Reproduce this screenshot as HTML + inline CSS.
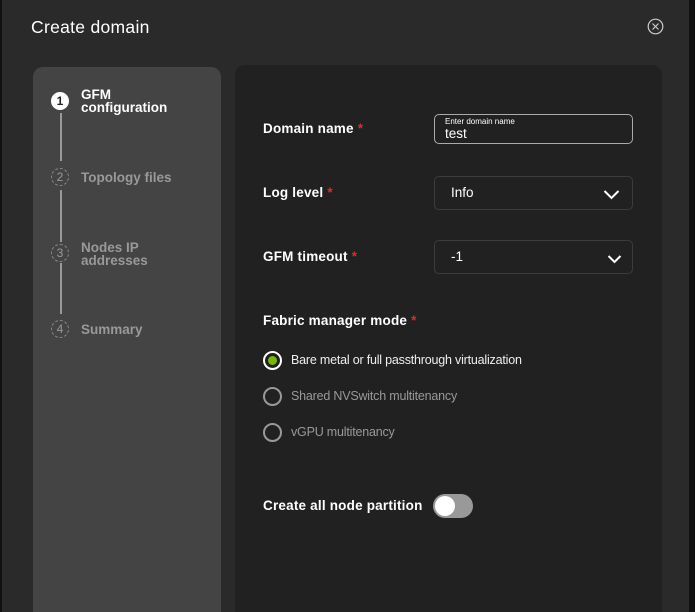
<!DOCTYPE html>
<html style="height:612px;overflow:hidden"><head><style>
body{margin:0;width:695px;height:612px;background:#111;overflow:hidden;font-family:"Liberation Sans",sans-serif;position:relative}
.modal{position:absolute;left:2px;top:0;width:687px;height:612px;background:#2a2a2a;overflow:hidden}
.t{position:absolute;left:29px;top:17px;color:#fff;font-size:17.5px;letter-spacing:0.3px}
.side{position:absolute;left:31px;top:67px;width:188px;height:560px;background:#444;border-radius:10px}
.main{position:absolute;left:233px;top:65px;width:427px;height:560px;background:#212121;border-radius:10px}
.step{position:absolute;left:18px;font-size:13.5px;font-weight:bold;color:#999;line-height:13px}
.num{position:absolute;width:18px;height:18px;border-radius:50%;border:1px dashed #888;box-sizing:border-box;text-align:center;line-height:16px;font-size:12px;color:#999;left:18px}
.line{position:absolute;left:27px;width:2px;background:#999}
.lbl{position:absolute;left:28px;color:#fff;font-size:13.5px;font-weight:bold;letter-spacing:0.2px}
.lbl i{color:#e0282e;font-style:normal;margin-left:4px}
.box{position:absolute;left:199px;width:199px;height:32px;border:1px solid #3c3c3c;border-radius:5px;box-sizing:border-box;color:#fff;font-size:13.5px}
.radio{position:absolute;left:28px;width:19px;height:19px;border-radius:50%;border:2px solid #999;box-sizing:border-box}
.rt{position:absolute;left:56px;font-size:12.5px;color:#999;letter-spacing:-0.2px}
</style></head><body>
<div class="modal">
<div class="t">Create domain</div>
<svg style="position:absolute;left:645px;top:18px" width="17" height="17" viewBox="0 0 17 17"><circle cx="8.5" cy="8.5" r="7.3" fill="none" stroke="#ccc" stroke-width="1.2"/><path d="M5.5 5.5L11.5 11.5M11.5 5.5L5.5 11.5" stroke="#ccc" stroke-width="1.2"/></svg>
<div class="side">
<div class="num" style="top:25px;background:#fff;border:none;color:#222;font-weight:bold;line-height:18px">1</div>
<div class="step" style="left:48px;top:21px;color:#fff">GFM<br>configuration</div>
<div class="line" style="top:46px;height:48px"></div>
<div class="num" style="top:101px">2</div>
<div class="step" style="left:48px;top:104px">Topology files</div>
<div class="line" style="top:123px;height:52px"></div>
<div class="num" style="top:177px">3</div>
<div class="step" style="left:48px;top:174px">Nodes IP<br>addresses</div>
<div class="line" style="top:196px;height:51px"></div>
<div class="num" style="top:253px">4</div>
<div class="step" style="left:48px;top:256px">Summary</div>
</div>
<div class="main">
<div class="lbl" style="top:56px">Domain name<i>*</i></div>
<div class="box" style="top:49px;height:30px;border-color:#aaa"><div style="position:absolute;left:10px;top:2px;font-size:8px">Enter domain name</div><div style="position:absolute;left:10px;top:11px">test</div></div>
<div class="lbl" style="top:120px">Log level<i>*</i></div>
<div class="box" style="top:111px;height:34px"><div style="position:absolute;left:16px;top:8px">Info</div><svg style="position:absolute;right:12px;top:12px" width="17" height="11"><path d="M1.5 2L8.5 9L15.5 2" fill="none" stroke="#fff" stroke-width="2"/></svg></div>
<div class="lbl" style="top:184px">GFM timeout<i>*</i></div>
<div class="box" style="top:175px;height:34px"><div style="position:absolute;left:16px;top:8px">-1</div><svg style="position:absolute;right:10px;top:13px" width="15" height="10"><path d="M1.5 2L7.5 8L13.5 2" fill="none" stroke="#fff" stroke-width="2"/></svg></div>
<div class="lbl" style="top:248px">Fabric manager mode<i>*</i></div>
<div class="radio" style="top:286px;border-color:#fff"><div style="position:absolute;left:3px;top:3px;width:9px;height:9px;border-radius:50%;background:#76b900"></div></div>
<div class="rt" style="top:288px;color:#eee">Bare metal or full passthrough virtualization</div>
<div class="radio" style="top:322px"></div>
<div class="rt" style="top:324px">Shared NVSwitch multitenancy</div>
<div class="radio" style="top:358px"></div>
<div class="rt" style="top:360px">vGPU multitenancy</div>
<div class="lbl" style="top:433px">Create all node partition</div>
<div style="position:absolute;left:198px;top:429px;width:40px;height:24px;border-radius:12px;background:#999"><div style="position:absolute;left:2px;top:2px;width:20px;height:20px;border-radius:50%;background:#fff"></div></div>
</div>
</div>
</body></html>
